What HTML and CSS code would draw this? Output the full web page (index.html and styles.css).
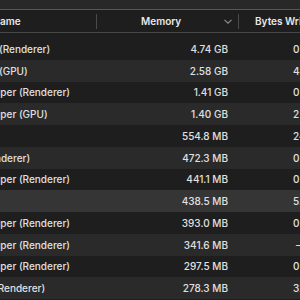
FILE: index.html
```html
<!DOCTYPE html>
<html>
<head>
<meta charset="utf-8">
<link rel="stylesheet" href="styles.css">
</head>
<body>
<div class="window">
  <div class="toolbar"></div>
  <div class="header">
    <div class="hcell name"><span class="hname">Name</span></div>
    <div class="sep"></div>
    <div class="hcell mem">
      <span class="hlabel">Memory</span>
      <svg class="chev" width="8" height="5" viewBox="0 0 8 5"><path d="M0.5 0.8 L4 4.2 L7.5 0.8" fill="none" stroke="#8e8e8e" stroke-width="1.1"/></svg>
    </div>
    <div class="sep"></div>
    <div class="hcell bytes">Bytes Written</div>
  </div>
  <div class="rows">
    <div class="row"><div class="cell name"><span class="nm o1">(Renderer)</span></div><div class="cell mem">4.74 GB</div><div class="cell bytes">0 bytes</div></div>
    <div class="row alt"><div class="cell name"><span class="nm o1">(GPU)</span></div><div class="cell mem">2.58 GB</div><div class="cell bytes">48.2 MB</div></div>
    <div class="row"><div class="cell name"><span class="nm oh">Helper (Renderer)</span></div><div class="cell mem">1.41 GB</div><div class="cell bytes">0 bytes</div></div>
    <div class="row alt"><div class="cell name"><span class="nm oh">Helper (GPU)</span></div><div class="cell mem">1.40 GB</div><div class="cell bytes">2 bytes</div></div>
    <div class="row"><div class="cell name"><span class="nm"></span></div><div class="cell mem">554.8 MB</div><div class="cell bytes">24.1 MB</div></div>
    <div class="row alt"><div class="cell name"><span class="nm or">(Renderer)</span></div><div class="cell mem">472.3 MB</div><div class="cell bytes">0 bytes</div></div>
    <div class="row"><div class="cell name"><span class="nm oh">Helper (Renderer)</span></div><div class="cell mem">441.1 MB</div><div class="cell bytes">0 bytes</div></div>
    <div class="row hi"><div class="cell name"><span class="nm"></span></div><div class="cell mem">438.5 MB</div><div class="cell bytes">5.3 MB</div></div>
    <div class="row"><div class="cell name"><span class="nm oh">Helper (Renderer)</span></div><div class="cell mem">393.0 MB</div><div class="cell bytes">0 bytes</div></div>
    <div class="row alt"><div class="cell name"><span class="nm oh">Helper (Renderer)</span></div><div class="cell mem">341.6 MB</div><div class="cell bytes dash">&ndash;</div></div>
    <div class="row"><div class="cell name"><span class="nm oh">Helper (Renderer)</span></div><div class="cell mem">297.5 MB</div><div class="cell bytes">0 bytes</div></div>
    <div class="row alt"><div class="cell name"><span class="nm o12">(Renderer)</span></div><div class="cell mem">278.3 MB</div><div class="cell bytes">32.4 MB</div></div>
  </div>
</div>
</body>
</html>
```

FILE: styles.css
```css
html, body {
  margin: 0;
  padding: 0;
  background: #1e1e1e;
  overflow: hidden;
}
.window {
  width: 360px;
  font-family: Inter, "Noto Sans", sans-serif;
  font-size: 10px;
  color: #e0e0e0;
}
.toolbar {
  height: 9px;
  background: #282828;
  border-bottom: 1px solid #575757;
}
.header {
  display: flex;
  align-items: center;
  height: 22px;
  background: #1e1e1e;
  border-bottom: 1px solid #474747;
  font-weight: 600;
  color: #e8e8e8;
}
.hcell {
  display: flex;
  align-items: center;
  height: 100%;
  overflow: hidden;
  white-space: nowrap;
}
.sep {
  width: 1px;
  height: 15px;
  background: #4a4a4a;
  flex: none;
}
.name { width: 96px; flex: none; overflow: hidden; white-space: nowrap; }
.mem { width: 141px; flex: none; }
.bytes { width: 120px; flex: none; }
.hname { margin-left: -7.5px; }
.hcell.mem { padding-left: 44px; padding-right: 6px; box-sizing: border-box; }
.chev { margin-left: auto; }
.hcell.bytes { padding-left: 16px; box-sizing: border-box; }
.rows { padding-top: 5px; }
.row {
  display: flex;
  align-items: center;
  height: 21.75px;
  gap: 1px;
  font-weight: 500;
}
.row.alt { background: #2a2a2a; }
.row.hi { background: #353535; }
.cell { white-space: nowrap; overflow: hidden; }
.cell.mem { text-align: right; padding-right: 10px; box-sizing: border-box; }
.cell.bytes { padding-left: 54px; box-sizing: border-box; }
.cell.bytes.dash { padding-left: 57px; }
.nm { display: inline-block; }
.o1 { margin-left: -1px; }
.oh { margin-left: -15.5px; }
.or { margin-left: -21px; }
.o12 { margin-left: -6px; }
```
